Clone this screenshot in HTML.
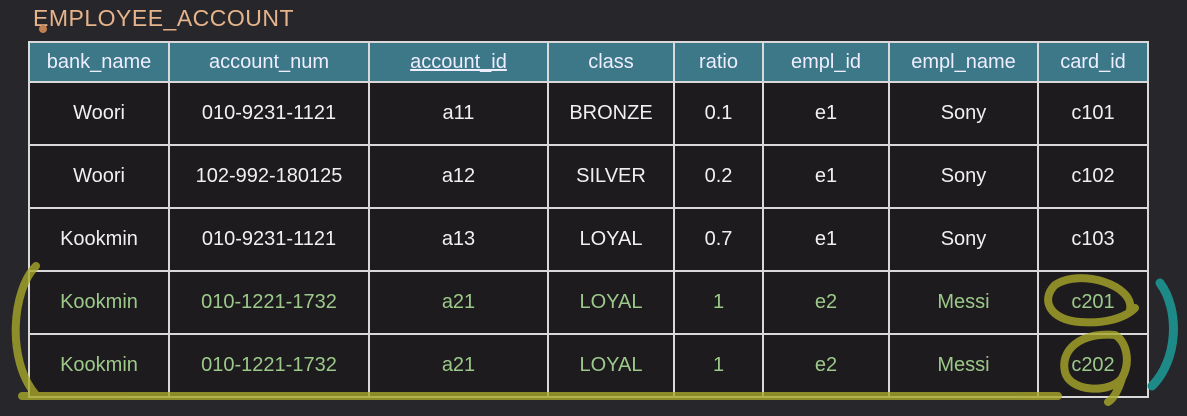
<!DOCTYPE html>
<html><head><style>
body{margin:0;width:1187px;height:416px;background:#27262a;overflow:hidden;position:relative;font-family:"Liberation Sans","DejaVu Sans",sans-serif}
.t{position:absolute;left:33px;top:5px;font-size:23px;color:#e6b48a;letter-spacing:0.5px}
table{position:absolute;left:28px;top:41px;border-collapse:collapse;table-layout:fixed;background:#1d1b1e}
td,th{border:2px solid #d9d9d9;text-align:center;font-size:20px;color:#f0f0f0;font-weight:normal;padding:0}
th{background:#3c7888;height:38px;color:#eef}
td{height:61px}
tr.g td{color:#9cc98a}
svg{position:absolute;left:0;top:0}
</style></head><body>
<div class="t">EMPLOYEE_ACCOUNT</div>
<table>
<colgroup><col style="width:140px"><col style="width:200px"><col style="width:179px"><col style="width:126px"><col style="width:89px"><col style="width:126px"><col style="width:149px"><col style="width:110px"></colgroup>
<tr><th>bank_name</th><th>account_num</th><th><u>account_id</u></th><th>class</th><th>ratio</th><th>empl_id</th><th>empl_name</th><th>card_id</th></tr>
<tr><td>Woori</td><td>010-9231-1121</td><td>a11</td><td>BRONZE</td><td>0.1</td><td>e1</td><td>Sony</td><td>c101</td></tr>
<tr><td>Woori</td><td>102-992-180125</td><td>a12</td><td>SILVER</td><td>0.2</td><td>e1</td><td>Sony</td><td>c102</td></tr>
<tr><td>Kookmin</td><td>010-9231-1121</td><td>a13</td><td>LOYAL</td><td>0.7</td><td>e1</td><td>Sony</td><td>c103</td></tr>
<tr class="g"><td>Kookmin</td><td>010-1221-1732</td><td>a21</td><td>LOYAL</td><td>1</td><td>e2</td><td>Messi</td><td>c201</td></tr>
<tr class="g"><td>Kookmin</td><td>010-1221-1732</td><td>a21</td><td>LOYAL</td><td>1</td><td>e2</td><td>Messi</td><td>c202</td></tr>
</table>
<svg width="1187" height="416" fill="none" stroke-linecap="round">
<g stroke="#a8a82a" stroke-width="8" opacity="0.8">
<path d="M36 266 C12 290 6 360 36 395"/>
<path d="M22 396 L1058 396"/>
<path d="M1130 310 C1135 285 1080 268 1055 285 C1040 300 1050 320 1080 322 C1105 324 1125 318 1135 308"/>
<path d="M1115 335 C1080 332 1060 350 1065 372 C1070 392 1110 394 1122 378 C1132 360 1125 340 1115 335 M1122 378 C1118 392 1112 400 1108 402"/>
</g>
<path d="M1160 283 C1180 310 1178 360 1152 386" stroke="#1e8a88" stroke-width="9" stroke-linecap="round"/>
<circle cx="43" cy="29" r="4" fill="#c08050"/>
</svg>
</body></html>
